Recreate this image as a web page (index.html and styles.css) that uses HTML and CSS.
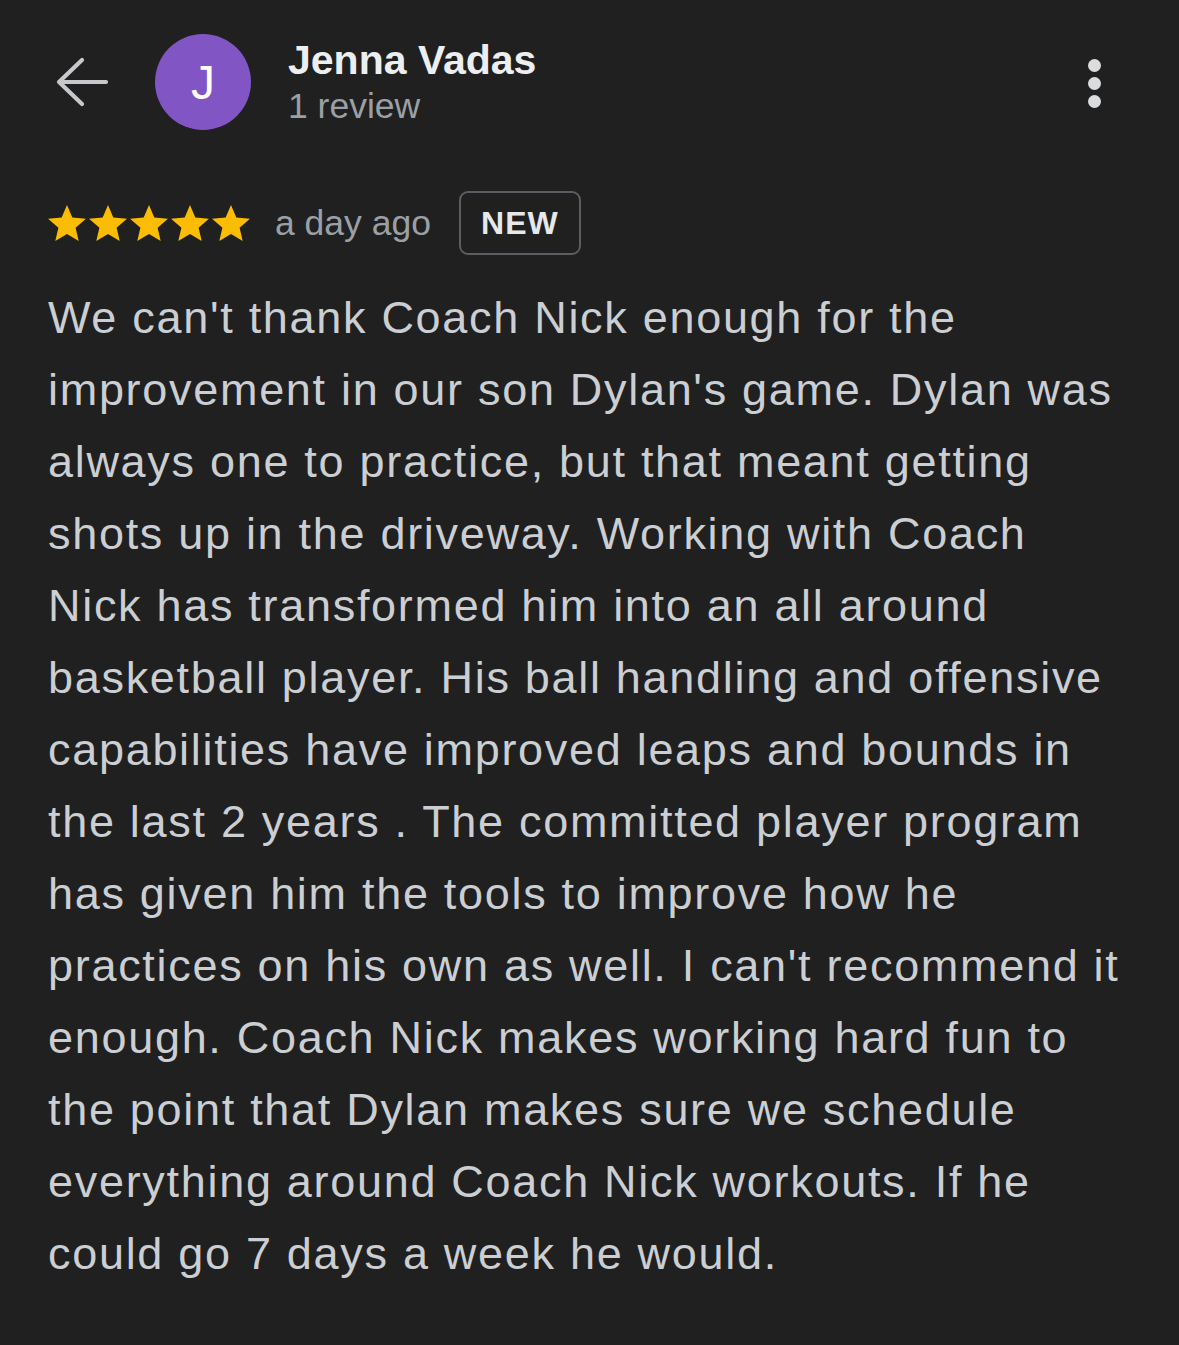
FILE: index.html
```html
<!DOCTYPE html>
<html>
<head>
<meta charset="utf-8">
<link rel="stylesheet" href="styles.css">
</head>
<body>
<div class="page">
  <header class="top">
    <svg class="back" width="56" height="52" viewBox="0 0 56 52">
      <path d="M52 26H5M28 4L5 26l23 22" fill="none" stroke="#c6c8cb" stroke-width="4.2" stroke-linecap="round" stroke-linejoin="round"/>
    </svg>
    <div class="avatar">J</div>
    <div class="who">
      <div class="name">Jenna Vadas</div>
      <div class="count">1 review</div>
    </div>
    <div class="kebab"><span></span><span></span><span></span></div>
  </header>

  <div class="meta">
    <div class="stars">
      <svg viewBox="2 2 20 19" width="38" height="36"><path d="M12 17.27L18.18 21l-1.64-7.03L22 9.24l-7.19-.61L12 2 9.19 8.63 2 9.24l5.46 4.73L5.82 21z"/></svg>
      <svg viewBox="2 2 20 19" width="38" height="36"><path d="M12 17.27L18.18 21l-1.64-7.03L22 9.24l-7.19-.61L12 2 9.19 8.63 2 9.24l5.46 4.73L5.82 21z"/></svg>
      <svg viewBox="2 2 20 19" width="38" height="36"><path d="M12 17.27L18.18 21l-1.64-7.03L22 9.24l-7.19-.61L12 2 9.19 8.63 2 9.24l5.46 4.73L5.82 21z"/></svg>
      <svg viewBox="2 2 20 19" width="38" height="36"><path d="M12 17.27L18.18 21l-1.64-7.03L22 9.24l-7.19-.61L12 2 9.19 8.63 2 9.24l5.46 4.73L5.82 21z"/></svg>
      <svg viewBox="2 2 20 19" width="38" height="36"><path d="M12 17.27L18.18 21l-1.64-7.03L22 9.24l-7.19-.61L12 2 9.19 8.63 2 9.24l5.46 4.73L5.82 21z"/></svg>
    </div>
    <span class="when">a day ago</span>
    <span class="badge">NEW</span>
  </div>

  <p class="review">We can't thank Coach Nick enough for the<br>improvement in our son Dylan's game. Dylan was<br>always one to practice, but that meant getting<br>shots up in the driveway. Working with Coach<br>Nick has transformed him into an all around<br>basketball player. His ball handling and offensive<br>capabilities have improved leaps and bounds in<br>the last 2 years . The committed player program<br>has given him the tools to improve how he<br>practices on his own as well. I can't recommend it<br>enough. Coach Nick makes working hard fun to<br>the point that Dylan makes sure we schedule<br>everything around Coach Nick workouts. If he<br>could go 7 days a week he would.</p>
</div>
</body>
</html>
```

FILE: styles.css
```css
html, body {
  margin: 0;
  padding: 0;
  background: #202020;
}
body {
  font-family: "Liberation Sans", Arial, sans-serif;
  color: #cdd0d3;
  width: 1179px;
  height: 1345px;
  overflow: hidden;
}
.page {
  padding: 34px 0 0 48px;
}
.top {
  display: flex;
  align-items: center;
  height: 96px;
}
.back {
  margin-left: 6px;
  margin-right: 45px;
  flex: none;
}
.avatar {
  width: 96px;
  height: 96px;
  border-radius: 50%;
  background: #8156c4;
  color: #ffffff;
  font-size: 48px;
  display: flex;
  align-items: center;
  justify-content: center;
  flex: none;
}
.who {
  margin-left: 37px;
  display: flex;
  flex-direction: column;
  flex: 1;
}
.name {
  font-size: 41px;
  font-weight: bold;
  color: #eceef0;
  line-height: 48px;
}
.count {
  font-size: 35.5px;
  color: #9aa0a6;
  line-height: 44px;
}
.kebab {
  display: flex;
  flex-direction: column;
  gap: 5px;
  margin-right: 78px;
  align-self: center;
  margin-top: 2px;
}
.kebab span {
  width: 13px;
  height: 13px;
  border-radius: 50%;
  background: #dadcde;
}
.meta {
  display: flex;
  align-items: center;
  margin-top: 61px;
  height: 64px;
}
.stars {
  display: flex;
  gap: 3px;
  fill: #fbbc04;
}
.stars svg {
  display: block;
}
.when {
  margin-left: 25px;
  font-size: 35.5px;
  color: #9aa0a6;
}
.badge {
  margin-left: 28px;
  box-sizing: border-box;
  height: 64px;
  width: 122px;
  border: 2px solid #5a5d61;
  border-radius: 9px;
  display: flex;
  align-items: center;
  justify-content: center;
  font-size: 32px;
  font-weight: bold;
  letter-spacing: 1px;
  color: #e6e8ea;
}
.review {
  margin: 27px 0 0 0;
  font-size: 45px;
  line-height: 72px;
  letter-spacing: 1.7px;
  color: #cbced2;
  white-space: nowrap;
}
```
